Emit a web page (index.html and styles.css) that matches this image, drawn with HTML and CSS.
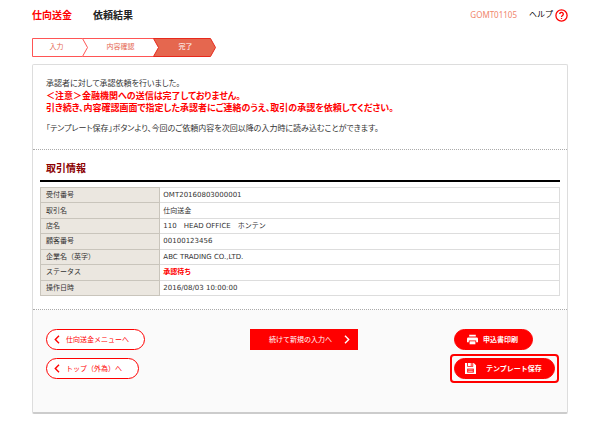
FILE: index.html
```html
<!DOCTYPE html>
<html lang="ja">
<head>
    <meta charset="UTF-8">
    <title>仕向送金 依頼結果</title>
    <link rel="stylesheet" href="styles.css">
</head>
<body>
    <header class="page-header">
        <h1 class="page-title"><span class="page-category">仕向送金</span>依頼結果</h1>
        <span class="screen-id">GOMT01105</span>
        <a class="help-link" href="#help">ヘルプ
            <svg class="help-icon" viewBox="0 0 13 13">
                <circle cx="6.5" cy="6.5" r="5.6" fill="#fff" stroke="#f00" stroke-width="1.3"/>
                <path d="M4.7 5.1a1.8 1.7 0 1 1 2.8 1.4c-.7.5-1 .7-1 1.4M6.5 8.9v1.2" fill="none" stroke="#f00" stroke-width="1.3"/>
            </svg>
        </a>
    </header>

    <div class="steps">
        <svg class="steps-shape" viewBox="0 0 185 21">
            <path d="M.5 1.5H50.5L55.5 10.5L50.5 19.5H.5Z" fill="#fff" stroke="#f55"/>
            <path d="M50.5 1.5H122M50.5 19.5H122" fill="none" stroke="#f55"/>
            <path d="M121.5 1.5H178.5L183.5 10.5L178.5 19.5H121.5L126.5 10.5Z" fill="#e5674f" stroke="#e8281c"/>
        </svg>
        <ol class="steps-list">
            <li class="step step-input">入力</li>
            <li class="step step-confirm">内容確認</li>
            <li class="step step-done" aria-current="step">完了</li>
        </ol>
    </div>

    <main class="card">
        <section class="message">
            <p>承認者に対して承認依頼を行いました。</p>
            <p class="caution">＜注意＞金融機関への送信は完了しておりません。<br>引き続き、内容確認画面で指定した承認者にご連絡のうえ、取引の承認を依頼してください。</p>
            <p class="note">「テンプレート保存」ボタンより、今回のご依頼内容を次回以降の入力時に読み込むことができます。</p>
        </section>

        <section class="deal">
            <h2 class="deal-title">取引情報</h2>
            <table class="deal-table">
                <tr><th scope="row">受付番号</th><td>OMT20160803000001</td></tr>
                <tr><th scope="row">取引名</th><td>仕向送金</td></tr>
                <tr><th scope="row">店名</th><td>110　HEAD OFFICE　ホンテン</td></tr>
                <tr><th scope="row">顧客番号</th><td>00100123456</td></tr>
                <tr><th scope="row">企業名（英字）</th><td>ABC TRADING CO.,LTD.</td></tr>
                <tr><th scope="row">ステータス</th><td class="status">承認待ち</td></tr>
                <tr><th scope="row">操作日時</th><td>2016/08/03 10:00:00</td></tr>
            </table>
        </section>

        <div class="actions">
            <div class="action-group">
                <button type="button" class="btn btn-back">
                    <svg class="arrow" viewBox="0 0 6 9"><path d="M5 .8L1.3 4.5L5 8.2" fill="none" stroke="currentColor" stroke-width="1.4"/></svg>
                    仕向送金メニューへ
                </button>
                <button type="button" class="btn btn-back btn-top">
                    <svg class="arrow" viewBox="0 0 6 9"><path d="M5 .8L1.3 4.5L5 8.2" fill="none" stroke="currentColor" stroke-width="1.4"/></svg>
                    トップ（外為）へ
                </button>
            </div>
            <div class="action-group">
                <button type="button" class="btn btn-next">
                    続けて新規の入力へ
                    <svg class="arrow" viewBox="0 0 6 9"><path d="M1 .8L4.7 4.5L1 8.2" fill="none" stroke="currentColor" stroke-width="1.4"/></svg>
                </button>
            </div>
            <div class="action-group">
                <button type="button" class="btn btn-fill btn-print">
                    <svg class="icon" viewBox="0 0 11 11">
                        <path d="M2.2.8h6.6v1.8H2.2zM1.4 3.4h8.2q1.4 0 1.4 1.4v3.4H9.2V6.6H1.8v1.6H0V4.8q0-1.4 1.4-1.4z" fill="#fff"/>
                        <path d="M2.6 7.3h5.8v3H2.6z" fill="#fff"/>
                    </svg>
                    申込書印刷
                </button>
                <button type="button" class="btn btn-fill btn-save">
                    <svg class="icon" viewBox="0 0 11 11">
                        <path d="M0 0h2.2v3.8h6V0h.6L11 2.2V11H0z" fill="#fff"/>
                        <path d="M3 0h2.8v3H3zM6.6 0h.8v3h-.8z" fill="#fff"/>
                        <path d="M2.2 5.6h6.6v4H2.2z" fill="#f00"/>
                        <path d="M3.2 6.9h4.6M3.2 8.4h4.6" stroke="#fff" stroke-width=".7"/>
                    </svg>
                    テンプレート保存
                </button>
            </div>
        </div>
    </main>
</body>
</html>
```

FILE: styles.css
```css
* {
    box-sizing: border-box;
}

body {
    font-family: "DejaVu Sans", "Noto Sans CJK JP", sans-serif;
    font-size: 7px;
    line-height: 12px;
    margin: 0;
    padding: 4px 32px 16px;
    color: #333;
    background-color: #fff;
}

h1, h2, p, ol {
    margin: 0;
    padding: 0;
}

.page-header {
    display: flex;
    align-items: center;
    height: 22px;
}

.page-title {
    flex: 1;
    font-family: "Noto Sans CJK JP", sans-serif;
    font-size: 10px;
    font-weight: bold;
    color: #222;
}

.page-category {
    margin-right: 21px;
    color: #f00;
}

.screen-id {
    font-family: "Noto Sans", sans-serif;
    font-size: 8px;
    color: #f0866c;
    margin-right: 12px;
}

.help-link {
    display: flex;
    align-items: center;
    gap: 2px;
    font-size: 8px;
    color: #000;
    text-decoration: none;
}

.help-icon {
    width: 13px;
    height: 13px;
}

.steps {
    position: relative;
    margin-top: 11px;
}

.steps-shape {
    position: absolute;
    top: 0;
    left: 0;
    width: 185px;
    height: 21px;
}

.steps-list {
    position: relative;
    display: flex;
    list-style: none;
    line-height: 21px;
    text-align: center;
    color: #e5674f;
}

.step-input {
    width: 49px;
}

.step-confirm {
    width: 79px;
}

.step-done {
    width: 51px;
    color: #fff;
}

.card {
    margin-top: 6px;
    border: 1px solid #ddd;
    border-bottom: 2px solid #ccc;
    border-radius: 2px;
}

.message {
    padding: 13px 13px 14px;
    border-bottom: 1px dotted #aaa;
    font-size: 8px;
    font-feature-settings: "palt";
}

.caution {
    font-size: 9px;
    font-weight: bold;
    color: #f00;
}

.note {
    margin-top: 9px;
}

.deal {
    padding: 11px 7px 13px;
    border-bottom: 1px dotted #aaa;
}

.deal-title {
    padding: 0 6px 3px;
    border-bottom: 2px solid #000;
    font-size: 10px;
    line-height: 16px;
    color: #8b0000;
}

.deal-table {
    width: 100%;
    height: 109px;
    margin-top: 5px;
    border-collapse: collapse;
}

.deal-table th,
.deal-table td {
    padding: 0 3px;
    border: 1px solid #ddd;
    text-align: left;
    font-weight: normal;
}

.deal-table th {
    width: 23%;
    padding-left: 5px;
    border-color: #c9c5bc;
    background-color: #ebe7e0;
}

.deal-table .status {
    font-weight: bold;
    color: #f00;
}

.actions {
    display: grid;
    grid-template-columns: 2fr 2fr 1fr;
    padding: 19px 11px 33px 13px;
    background-color: #fafafa;
}

.action-group {
    display: flex;
    flex-direction: column;
    align-items: flex-start;
    gap: 8px;
}

.btn {
    display: flex;
    align-items: center;
    height: 21px;
    padding: 0 7px;
    border: 1px solid #f00;
    border-radius: 11px;
    font-family: inherit;
    font-size: 7px;
    line-height: 12px;
    white-space: nowrap;
    cursor: pointer;
}

.btn-back {
    width: 99px;
    gap: 6px;
    background-color: #fff;
    color: #f00;
}

.btn-top {
    width: 93px;
}

.btn-next {
    width: 108px;
    justify-content: flex-end;
    gap: 12px;
    border-radius: 0;
    background-color: #f00;
    color: #fff;
}

.btn-fill {
    background-color: #f00;
    color: #fff;
    font-weight: bold;
}

.btn-print {
    width: 79px;
    gap: 5px;
    padding-left: 12px;
}

.btn-save {
    position: relative;
    width: 101px;
    gap: 10px;
    padding-left: 10px;
}

/* red frame around the save button */
.btn-save::after {
    content: "";
    position: absolute;
    inset: -5px;
    border: 2px solid #f00;
    border-radius: 4px;
}

.arrow {
    width: 6px;
    height: 9px;
}

.icon {
    width: 11px;
    height: 11px;
}
```
